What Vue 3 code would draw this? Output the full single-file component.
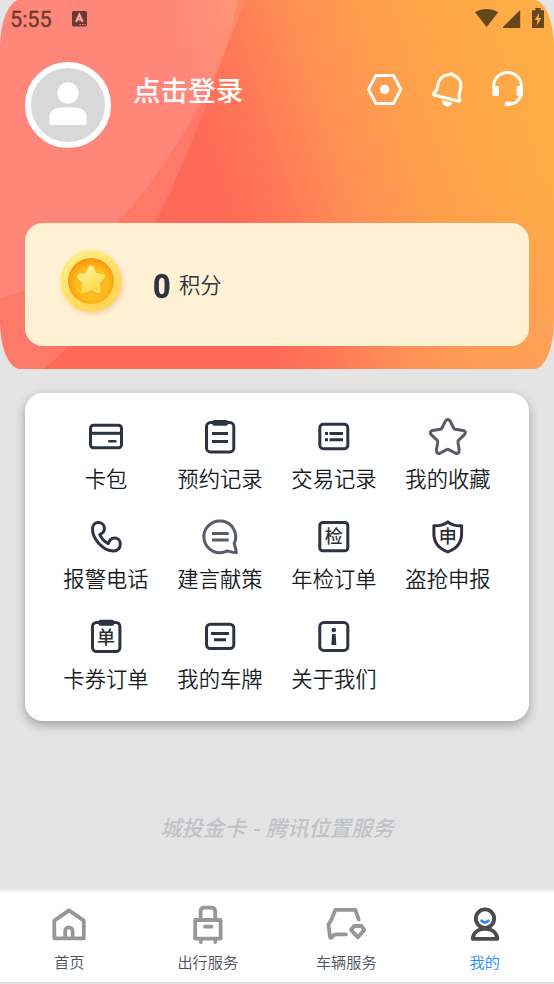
<script setup>
const menu = [
  { icon: 'card', label: '卡包' },
  { icon: 'clipboard', label: '预约记录' },
  { icon: 'list', label: '交易记录' },
  { icon: 'star', label: '我的收藏', soft: true },
  { icon: 'phone', label: '报警电话' },
  { icon: 'chat', label: '建言献策', soft: true },
  { icon: 'inspect', label: '年检订单' },
  { icon: 'shield', label: '盗抢申报' },
  { icon: 'ticket', label: '卡券订单' },
  { icon: 'plate', label: '我的车牌' },
  { icon: 'about', label: '关于我们' },
]
const tabs = [
  { icon: 'home', label: '首页' },
  { icon: 'travel', label: '出行服务' },
  { icon: 'car', label: '车辆服务' },
  { icon: 'mine', label: '我的', active: true },
]
</script>

<template>
  <div class="screen">
    <header class="hero">
      <svg class="waves" viewBox="0 0 554 369" preserveAspectRatio="none">
        <path d="M0 0H244Q233 37 212 80Q188 132 145 190Q132 208 117 223Q72 273 25 290Q13 295 0 298Z" />
        <path d="M0 0H238Q230 38 217 75Q196 134 171 190L155 223Q119 293 68 346Q57 358 44 369H0Z" />
      </svg>

      <div class="status">
        <span class="time">5:55</span>
        <svg class="app-badge" width="15" height="16" viewBox="0 0 15 16">
          <rect width="15" height="15.5" rx="1.5" fill="#683a36" />
          <path d="M4 11 7.3 3.5 10.7 11M5.3 8.6H9.4" fill="none" stroke="#ffa59b" stroke-width="2" />
          <path d="M7.5 13.6h1.4M10 13.6h1.4M12.4 13.6h1.2" stroke="#ff8579" stroke-width="1.2" />
        </svg>
        <svg class="signals" width="70" height="22" viewBox="0 0 70 22">
          <path d="M0 4.2Q5.2 .9 11.5 .9T23.2 4.2L11.6 19Z" />
          <path d="M45.2 2V20H28V19Z" />
          <path d="M57 2.2h3.4V0h5.2v2.2H69V20H57Z" />
          <path d="M64.3 4.8 59.8 12h2.7l-.8 5.6L66.4 10h-2.7Z" fill="#ffad48" />
        </svg>
      </div>

      <div class="profile">
        <div class="avatar">
          <svg width="74" height="74" viewBox="0 0 74 74">
            <circle cx="37" cy="25" r="10.7" />
            <path d="M18.4 56.5V49.5C18.4 41.5 23.5 39.2 37 39.2S55.6 41.5 55.6 49.5V54.5Q55.6 57.1 53 57.1H20.5Q18.4 57.1 18.4 54.5Z" />
          </svg>
        </div>
        <span class="login">点击登录</span>
        <div class="actions">
          <svg width="40" height="40" viewBox="0 0 40 40">
            <path d="M11 5.4H28.5L35.8 19.4 28.5 33.5H11L3.4 19.4Z" />
            <circle class="solid" cx="19.6" cy="19.4" r="4.7" />
          </svg>
          <svg width="40" height="40" viewBox="0 0 40 40">
            <path d="M22.7 4.6Q25 2.5 27.1 5.8Q34 8 33.9 16Q33.7 20 32.1 24.3Q31.6 27 33 30.2L31.6 31.2L7 25Q6 24.3 7.2 22.8Q10.2 20.5 10.8 15.5Q12.4 5.3 22.7 4.6Z" />
            <path class="solid" d="M15 30 25.2 32.7C24 38 15 38 15 30Z" />
          </svg>
          <svg class="headset" width="40" height="40" viewBox="0 0 40 40">
            <path d="M5.6 18V16.3A13.9 13.9 0 0 1 33.4 16.3V21.5C33.4 28 28.6 34.1 21 34.1H17.2" />
            <rect class="solid" x="4.4" y="16" width="6.6" height="10" rx="2" />
            <rect class="solid" x="28.4" y="16" width="6.6" height="9.7" rx="2" />
            <rect class="solid" x="17" y="31.6" width="6" height="4.5" rx="1" />
          </svg>
        </div>
      </div>

      <section class="points">
        <svg class="coin" width="76" height="76" viewBox="0 0 76 76">
          <defs>
            <linearGradient id="rim" x1="0" y1="0" x2=".6" y2="1">
              <stop offset="0" stop-color="#fff08a" /><stop offset="1" stop-color="#ffd455" />
            </linearGradient>
            <radialGradient id="core" cx=".52" cy=".56" r=".55">
              <stop offset=".62" stop-color="#ffbe17" /><stop offset="1" stop-color="#f99512" />
            </radialGradient>
            <linearGradient id="gold" x1="0" y1="0" x2=".5" y2="1">
              <stop offset="0" stop-color="#fff2a0" /><stop offset="1" stop-color="#ffdc4d" />
            </linearGradient>
            <filter id="drop" x="-30%" y="-30%" width="170%" height="170%">
              <feDropShadow dx="2" dy="3" stdDeviation="2" flood-color="#e7a06f" flood-opacity=".35" />
            </filter>
          </defs>
          <circle cx="38" cy="38" r="30.8" fill="url(#rim)" filter="url(#drop)" />
          <circle cx="38" cy="38" r="23" fill="url(#core)" />
          <path d="M38 25.3 41.8 32.2 49.5 33.6 44.2 39.2 45.1 47.4 38 44.2 30.8 47.4 31.8 39.2 26.7 33.6 34.2 32.2Z" fill="url(#gold)" stroke="url(#gold)" stroke-width="5" stroke-linejoin="round" filter="url(#drop)" />
        </svg>
        <span class="amount">0</span>
        <span class="unit">积分</span>
      </section>
    </header>

    <main class="menu">
      <div v-for="item in menu" :key="item.label" class="entry">
        <svg class="glyph" :class="{ soft: item.soft }" width="40" height="40" viewBox="0 0 40 40">
          <template v-if="item.icon === 'card'">
            <rect x="4.5" y="8.3" width="31" height="22.4" rx="3" />
            <path d="M4 16.3H36" /><path d="M23.3 24.3H29.3" stroke-linecap="round" stroke-width="2.6" />
          </template>
          <template v-else-if="item.icon === 'clipboard'">
            <rect x="6.5" y="5.6" width="27.3" height="29.3" rx="4" />
            <rect class="fill" x="12.3" y="3" width="15.7" height="5.8" rx="1.8" />
            <path d="M12 16.4H28M12 24.4H28" />
          </template>
          <template v-else-if="item.icon === 'list'">
            <rect x="5.8" y="7.2" width="28" height="24.6" rx="3.5" />
            <path d="M11 16.4h3M15.5 16.4H29M11 22.7h3M15.5 22.7H29" />
          </template>
          <path v-else-if="item.icon === 'star'" d="M17.4 4.2Q19.8.9 22.2 4.2L25.6 11Q26.1 12 27.2 12.3L35 13.5Q39 14.7 36.2 17.9L30.7 23.2Q29.7 24 30 25.4L31.2 33Q31.2 37.6 27.3 36L20.8 32.6Q19.8 32 18.8 32.6L12.3 36Q8.4 37.6 8.4 33L9.7 25.4Q10 24 9 23.2L3.4 17.9Q.6 14.7 4.6 13.5L12.4 12.3Q13.5 12 14 11Z" />
          <path v-else-if="item.icon === 'phone'" d="M6.5 12C6.5 8 9 5.5 12.4 5.5C16 5.5 18.4 8.2 18.4 11.5C18.4 14.3 17 16.2 13.8 17.6C15.3 20.8 18.7 24.8 22.2 26.6C23.5 23 25.7 21.1 28.7 21.1C32 21.1 34.3 23.7 34.3 27C34.3 31.5 31.4 33.9 27.5 33.9C17 33.9 6.5 22 6.5 12Z" />
          <template v-else-if="item.icon === 'chat'">
            <path d="M34.2 26.6A15.9 15.9 0 1 0 27.2 33.9C29.5 34 32.5 35.8 36.3 35.5C36 32 34.8 29 34.2 26.6Z" />
            <path d="M12 16.4H28.7M12 23H28.7" />
          </template>
          <template v-else-if="item.icon === 'inspect'">
            <rect x="5.8" y="5.5" width="28" height="28.2" rx="3" />
            <text x="19.8" y="26.2">检</text>
          </template>
          <template v-else-if="item.icon === 'shield'">
            <path d="M19.8 4.8C16.5 7.6 12 9 5.9 8.8V17C5.9 26 12 32 19.8 34.9C27.6 32 33.6 26 33.6 17V8.8C27.5 9 23 7.6 19.8 4.8Z" />
            <text x="19.8" y="26.2">申</text>
          </template>
          <template v-else-if="item.icon === 'ticket'">
            <rect x="6.5" y="5.4" width="27.4" height="29.2" rx="4" />
            <rect class="fill" x="12.5" y="2.8" width="15.7" height="6" rx="1.8" />
            <text x="20.1" y="27.2">单</text>
          </template>
          <template v-else-if="item.icon === 'plate'">
            <rect x="6.5" y="7.2" width="27.3" height="24.4" rx="4" />
            <path d="M11 16.4H29M14 22.7H26" />
          </template>
          <template v-else>
            <rect x="5.8" y="5.6" width="28" height="27.8" rx="4" />
            <circle class="fill" cx="19.8" cy="13" r="2.3" />
            <path class="fill" d="M18 17H21.6L22.3 28H17.4Z" />
          </template>
        </svg>
        <span class="label">{{ item.label }}</span>
      </div>
    </main>

    <p class="credit">城投金卡 - 腾讯位置服务</p>

    <nav class="tabs">
      <div v-for="tab in tabs" :key="tab.label" class="tab" :class="{ active: tab.active }">
        <svg width="40" height="40" viewBox="0 0 40 40">
          <g v-if="tab.icon === 'home'">
            <path d="M20 5.4 5.3 15.6V33.4H34.8V15.6Z" />
            <path d="M16.2 33.4V26A3.7 3.7 0 0 1 23.6 26V33.4" />
          </g>
          <g v-else-if="tab.icon === 'travel'">
            <rect x="7.2" y="15" width="25.4" height="18.6" />
            <path d="M12.6 15V6.5Q12.6 2.7 16.4 2.7H23.4Q27.2 2.7 27.2 6.5V15M12.9 34V37M27.2 34V37M17 21.7H23.5" stroke-linecap="round" />
          </g>
          <g v-else-if="tab.icon === 'car'">
            <path d="M32.7 14.5 29.4 4.8H9.4L5.5 14.5 2.5 19.4 4 32Q4.2 33.4 6 32.4Q7.5 29.3 10 29.3H20" stroke-linecap="round" />
            <path d="M28 21H35.6L38.3 25 31.8 32.3 25 25Z" />
          </g>
          <g v-else>
            <circle cx="20" cy="13.6" r="9.2" />
            <path d="M7.7 33.8C8.3 27.5 13 23.8 20 23.8S31.7 27.5 32.4 33.8Z" />
            <path class="smile" d="M16.6 15.8Q20 19.2 23.4 15.8" />
          </g>
        </svg>
        <span>{{ tab.label }}</span>
      </div>
    </nav>
  </div>
</template>

<style>
body {
  margin: 0;
  background: #e4e4e4;
}
</style>

<style scoped>
.screen {
  width: 554px;
  height: 984px;
  display: flex;
  flex-direction: column;
  overflow: hidden;
  background: #e4e4e4;
  font-family: "Noto Sans CJK SC", sans-serif;
}
.hero {
  position: relative;
  flex: none;
  box-sizing: border-box;
  height: 369px;
  border-radius: 20px / 48px;
  overflow: hidden;
  background:
    radial-gradient(circle at 100% 100%, rgba(255, 150, 112, 0.4), rgba(255, 150, 112, 0) 190px),
    linear-gradient(72deg, #ff6a58 41%, #ff7858 50%, #ff8d56 59%, #ffa04c 73%, #ffa947 86%, #ffae45);
}
.waves {
  position: absolute;
  inset: 0;
  width: 100%;
  height: 100%;
  fill: rgba(255, 255, 255, 0.1);
}
.status {
  position: relative;
  display: flex;
  height: 38px;
  padding: 0 9px 0 10px;
  align-items: center;
}
.time {
  width: 62px;
  font: 400 21.6px/38px Roboto, sans-serif;
  padding-top: 1px;
  color: #683a36;
  -webkit-text-stroke: 0.3px #683a36;
}
.signals {
  margin-left: auto;
  fill: #66471d;
}
.profile {
  position: relative;
  display: flex;
  height: 185px;
  box-sizing: border-box;
  padding: 24px 25px 0;
}
.avatar {
  box-sizing: border-box;
  width: 86px;
  height: 86px;
  border: 6px solid #fff;
  border-radius: 50%;
  background: #d8d8d8;
}
.avatar svg {
  display: block;
  fill: #fff;
}
.login {
  margin-left: 22px;
  height: 54px;
  font-size: 27.6px;
  line-height: 54px;
  font-weight: 500;
  color: #fff;
}
.actions {
  display: flex;
  gap: 22px;
  margin: 8px 1px 0 auto;
}
.actions svg {
  fill: none;
  stroke: #fff;
  stroke-width: 3;
  stroke-linejoin: round;
}
.actions .headset {
  margin-left: -1px;
}
.actions .solid {
  fill: #fff;
  stroke: none;
}
.points {
  position: relative;
  display: flex;
  align-items: center;
  height: 123px;
  margin: 0 25px;
  border-radius: 18px;
  background: #fff1d3;
}
.coin {
  margin: 0 24px 7px 28px;
}
.amount {
  width: 26px;
  padding-top: 2px;
  font: 700 34px/40px Roboto, sans-serif;
  color: #2d3342;
  -webkit-text-stroke: 0.4px #2d3342;
  transform: scaleX(0.9);
  transform-origin: 0 50%;
}
.unit {
  margin-bottom: 2px;
  font-size: 21.33px;
  line-height: 32px;
  font-weight: 350;
  color: #2d3342;
}
.menu {
  flex: none;
  box-sizing: border-box;
  display: grid;
  grid-template-columns: repeat(4, 114px);
  grid-auto-rows: 100px;
  height: 328px;
  margin: 24px 25px 0;
  padding: 24px 24px 0;
  border-radius: 18px;
  background: #fff;
  box-shadow: 0 4px 11px rgba(0, 0, 0, 0.3);
}
.entry {
  display: flex;
  flex-direction: column;
  align-items: center;
}
.glyph {
  fill: none;
  stroke: #2d3342;
  stroke-width: 3;
  stroke-linejoin: round;
}
.glyph.soft {
  stroke: #585c66;
}
.glyph .fill {
  fill: #2d3342;
  stroke: none;
}
.glyph text {
  fill: #2d3033;
  stroke: none;
  font-size: 18px;
  font-weight: 500;
  text-anchor: middle;
}
.label {
  margin-top: 5px;
  font-size: 21.33px;
  line-height: 32px;
  font-weight: 350;
  color: #191b1f;
  white-space: nowrap;
}
.credit {
  margin: 90px 0 0;
  text-align: center;
  font-size: 21.33px;
  line-height: 32px;
  font-weight: 500;
  font-style: italic;
  word-spacing: 1.5px;
  color: #c0c2c6;
}
.tabs {
  display: flex;
  box-sizing: border-box;
  height: 93px;
  margin-top: auto;
  margin-bottom: 1px;
  padding-top: 13px;
  border-top: 2px solid #f0f0f0;
  border-bottom: 1px solid #d8d8d8;
  background: #fff;
}
.tab {
  flex: 1;
  display: flex;
  flex-direction: column;
  align-items: center;
  font-size: 15.2px;
  line-height: 24px;
  font-weight: 350;
  color: #4c525c;
}
.tab svg {
  fill: none;
  stroke: #979797;
  stroke-width: 3.8;
  stroke-linejoin: round;
}
.tab span {
  margin-top: 4px;
}
.tab.active {
  color: #2b8aff;
}
.tab.active svg {
  stroke: #4b4b4b;
}
.tab .smile {
  stroke: #2b8aff;
  stroke-width: 2.8;
  stroke-linecap: round;
}
</style>
